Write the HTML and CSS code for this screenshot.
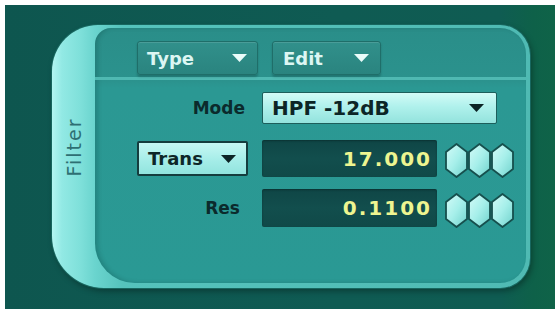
FILE: index.html
```html
<!DOCTYPE html>
<html>
<head>
<meta charset="utf-8">
<link rel="stylesheet" href="styles.css">
</head>
<body>
<div class="frame">
  <div class="panel">
    <div class="tab"><span class="tab-label">Filter</span></div>
    <div class="content">
      <div class="topbar">
        <div class="menu-btn btn-type"><span>Type</span><svg class="tri" viewBox="0 0 15 8"><polygon points="0,0 15,0 7.5,8" fill="#eafcfa"/></svg></div>
        <div class="menu-btn btn-edit"><span>Edit</span><svg class="tri" viewBox="0 0 15 8"><polygon points="0,0 15,0 7.5,8" fill="#eafcfa"/></svg></div>
      </div>
      <div class="body">
        <div class="row row-mode">
          <div class="label">Mode</div>
          <div class="dropdown"><span>HPF -12dB</span><svg class="tri" viewBox="0 0 15 8"><polygon points="0,0 15,0 7.5,8" fill="#0c2425"/></svg></div>
        </div>
        <div class="row row-trans">
          <div class="cell"><div class="trans"><span>Trans</span><svg class="tri" viewBox="0 0 15 8"><polygon points="0,0 15,0 7.5,8" fill="#0c2425"/></svg></div></div>
          <div class="field">17.000</div>
          <div class="hexes">
            <svg class="hex" viewBox="0 0 23 35"><polygon points="11.5,1 22,9 22,26 11.5,34 1,26 1,9"/></svg>
            <svg class="hex" viewBox="0 0 23 35"><polygon points="11.5,1 22,9 22,26 11.5,34 1,26 1,9"/></svg>
            <svg class="hex" viewBox="0 0 23 35"><polygon points="11.5,1 22,9 22,26 11.5,34 1,26 1,9"/></svg>
          </div>
        </div>
        <div class="row row-res">
          <div class="label label-res">Res</div>
          <div class="field">0.1100</div>
          <div class="hexes">
            <svg class="hex" viewBox="0 0 23 35"><polygon points="11.5,1 22,9 22,26 11.5,34 1,26 1,9"/></svg>
            <svg class="hex" viewBox="0 0 23 35"><polygon points="11.5,1 22,9 22,26 11.5,34 1,26 1,9"/></svg>
            <svg class="hex" viewBox="0 0 23 35"><polygon points="11.5,1 22,9 22,26 11.5,34 1,26 1,9"/></svg>
          </div>
        </div>
      </div>
    </div>
  </div>
</div>
<svg width="0" height="0" class="defs">
  <defs>
    <linearGradient id="hexg" x1="0" y1="0" x2="1" y2="1">
      <stop offset="0" stop-color="#d4fbf8"/>
      <stop offset="0.5" stop-color="#a6efea"/>
      <stop offset="1" stop-color="#6fd2cc"/>
    </linearGradient>
  </defs>
</svg>
</body>
</html>
```
FILE: styles.css
```css
html, body {
  margin: 0;
  padding: 0;
  background: #ffffff;
}

body {
  width: 560px;
  height: 309px;
  overflow: hidden;
  font-family: "DejaVu Sans", "Liberation Sans", sans-serif;
}

.defs {
  position: absolute;
}

.frame {
  margin: 5px 5px 0 5px;
  height: 304px;
  box-sizing: border-box;
  padding: 20px 0 0 47px;
  background: linear-gradient(90deg, #0e564f 0%, #0f5b53 60%, #0f5c52 90%, #0e6149 96%, #0f6348 100%);
}

.panel {
  width: 478px;
  height: 263px;
  box-sizing: border-box;
  display: flex;
  padding: 3px 4px 5px 0;
  border-radius: 46px 30px 30px 52px;
  background: linear-gradient(90deg, #b3f6f2 0px, #92e9e4 10px, #7fe0da 28px, #6ad4ce 43px, #55c3bc 70px, #4fbab3 100%);
  box-shadow: 0 0 0 1px #17675f, 2px 3px 6px rgba(0, 0, 0, 0.35);
}

.tab {
  width: 43px;
  flex: none;
  display: flex;
  align-items: center;
  justify-content: center;
  padding-bottom: 18px;
}

.tab-label {
  transform: rotate(-90deg);
  color: #2e6f73;
  font-size: 19px;
  letter-spacing: 2px;
  white-space: nowrap;
}

.content {
  flex: 1;
  display: flex;
  flex-direction: column;
  border-radius: 16px 26px 26px 40px;
  background: linear-gradient(180deg, #2a8e89 0px, #2b928d 52px, #2b9893 60px, #2a9994 100%);
  box-shadow: inset 3px 0 4px rgba(0, 40, 40, 0.18);
}

.topbar {
  height: 52px;
  box-sizing: border-box;
  padding: 13px 0 0 42px;
  display: flex;
  gap: 14px;
  align-items: flex-start;
  border-bottom: 3px solid #4fb9b2;
}

.menu-btn {
  height: 34px;
  box-sizing: border-box;
  display: flex;
  align-items: center;
  justify-content: space-between;
  background: linear-gradient(180deg, #31908b 0%, #2a847f 100%);
  border: 1px solid #1f6e69;
  border-radius: 3px;
  box-shadow: inset 0 1px 0 rgba(255, 255, 255, 0.12), 0 2px 2px rgba(0, 30, 30, 0.25);
  color: #dcf6f3;
  font-size: 18px;
  font-weight: bold;
}

.btn-type {
  width: 121px;
  padding: 0 10px 0 9px;
}

.btn-edit {
  width: 109px;
  padding: 0 11px 0 10px;
}

.tri {
  width: 15px;
  height: 8px;
  display: block;
}

.body {
  padding: 12px 0 0 42px;
  display: flex;
  flex-direction: column;
}

.row {
  display: flex;
  align-items: center;
  gap: 14px;
}

.row-mode {
  height: 32px;
}

.row-trans {
  margin-top: 16px;
  height: 37px;
}

.row-res {
  margin-top: 12px;
  height: 38px;
}

.label,
.cell {
  width: 111px;
  flex: none;
}

.label {
  text-align: right;
  box-sizing: border-box;
  padding-right: 3px;
  color: #0b2a2c;
  font-size: 17px;
  font-weight: bold;
}

.label-res {
  padding-right: 8px;
}

.dropdown {
  width: 235px;
  height: 32px;
  box-sizing: border-box;
  display: flex;
  align-items: center;
  justify-content: space-between;
  padding: 0 12px 0 9px;
  border: 1px solid #1d5e5b;
  border-radius: 2px;
  background: linear-gradient(180deg, #d2fbf7 0%, #b0f1ec 45%, #93e3dd 100%);
  color: #0c2526;
  font-size: 20px;
  font-weight: bold;
}

.trans {
  width: 111px;
  height: 35px;
  box-sizing: border-box;
  display: flex;
  align-items: center;
  justify-content: space-between;
  padding: 0 10px 0 9px;
  border: 2px solid #153d3e;
  border-radius: 2px;
  background: linear-gradient(180deg, #c6f8f4 0%, #a3ece7 60%, #92e4de 100%);
  color: #0d2627;
  font-size: 18px;
  font-weight: bold;
}

.field {
  width: 175px;
  height: 100%;
  box-sizing: border-box;
  display: flex;
  align-items: center;
  justify-content: flex-end;
  padding-right: 5px;
  border-radius: 2px;
  background: linear-gradient(180deg, #0f4646 0%, #124e4d 50%, #104948 100%);
  box-shadow: inset 0 1px 2px rgba(0, 0, 0, 0.3);
  color: #eef590;
  font-size: 20px;
  font-weight: bold;
  letter-spacing: 2px;
}

.hexes {
  display: flex;
  margin-left: -6px;
  margin-top: 4px;
}

.hex {
  width: 23px;
  height: 35px;
  display: block;
}

.hex polygon {
  fill: url(#hexg);
  stroke: #164f4d;
  stroke-width: 1.8;
  stroke-linejoin: round;
}
```
